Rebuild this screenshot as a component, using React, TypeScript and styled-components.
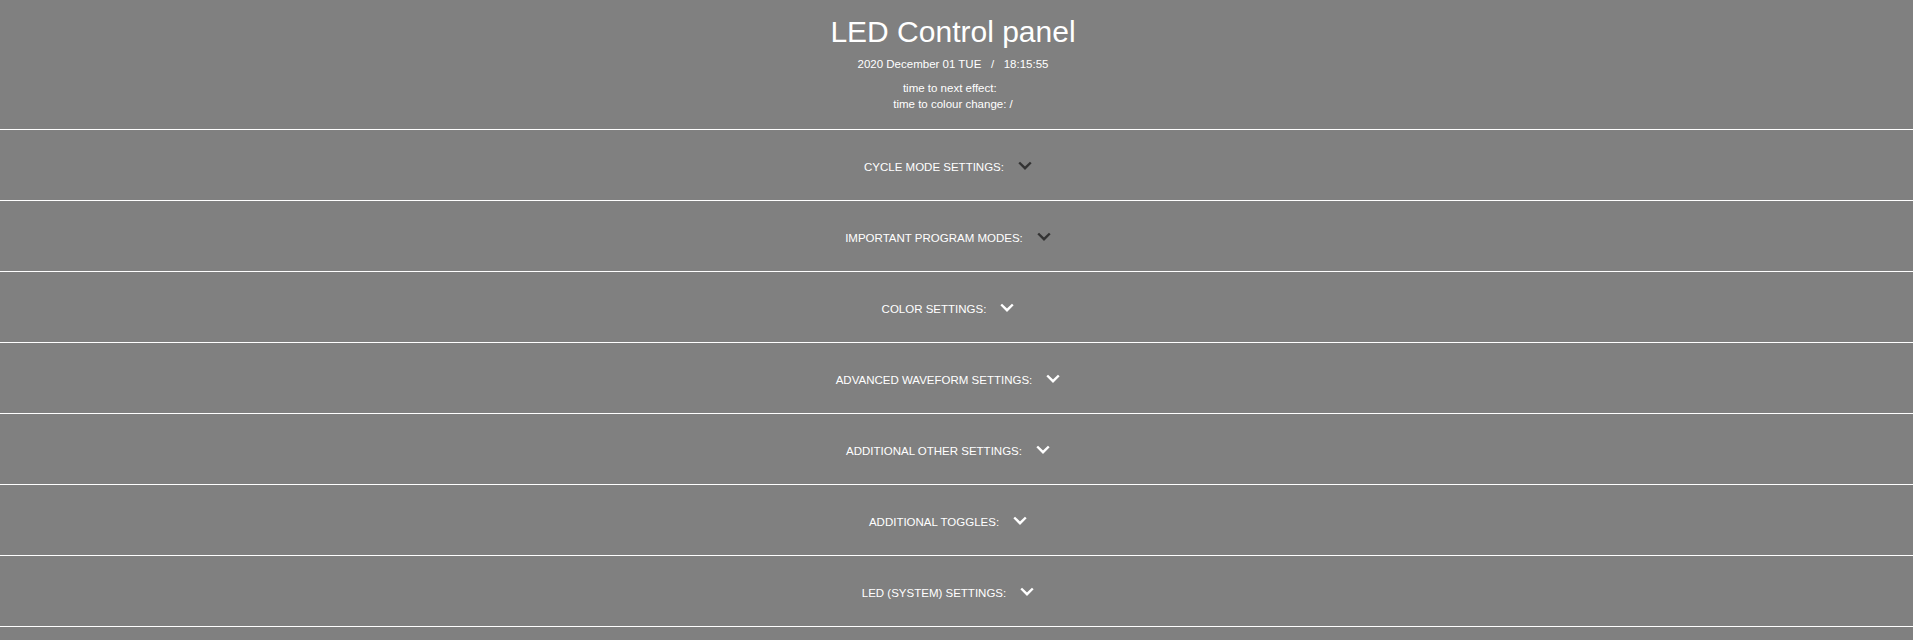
import React from "react";
import styled, { createGlobalStyle } from "styled-components";

const GlobalStyle = createGlobalStyle`
  html, body {
    margin: 0;
    padding: 0;
    background: #808080;
  }
  body {
    font-family: "Liberation Sans", Arial, sans-serif;
    color: #ffffff;
  }
`;

const Page = styled.div`
  min-height: 640px;
  background: #808080;
`;

const Header = styled.header`
  height: 129px;
  box-sizing: border-box;
  padding: 15px 7px 0 0;
  display: flex;
  flex-direction: column;
  align-items: center;
`;

const Title = styled.h1`
  margin: 0;
  font-size: 30px;
  font-weight: 400;
  line-height: 34px;
`;

const DateLine = styled.div`
  margin-top: 9px;
  font-size: 11.5px;
  line-height: 13px;
  white-space: pre;
`;

const Timers = styled.div`
  margin-top: 10px;
  font-size: 11.5px;
  line-height: 15.5px;
  text-align: center;
`;

const TimerLine = styled.div`
  white-space: pre;
`;

const Sections = styled.div`
  display: flex;
  flex-direction: column;
  border-bottom: 1px solid #ffffff;
`;

const Row = styled.div`
  height: 71px;
  box-sizing: border-box;
  padding-top: 4px;
  border-top: 1px solid #ffffff;
  display: flex;
  align-items: center;
  justify-content: center;
  font-size: 11.5px;
  text-transform: uppercase;
  cursor: pointer;
`;

const Label = styled.span`
  line-height: 14px;
`;

const Chevron = styled.svg<{ $dark?: boolean }>`
  width: 14px;
  height: 9px;
  margin: 0 17px 3px 14px;
  stroke: ${(p) => (p.$dark ? "#333333" : "#ffffff")};
  fill: none;
  stroke-width: 2.4;
`;

const sections: { label: string; dark?: boolean }[] = [
  { label: "CYCLE MODE SETTINGS:", dark: true },
  { label: "IMPORTANT PROGRAM MODES:", dark: true },
  { label: "COLOR SETTINGS:" },
  { label: "ADVANCED WAVEFORM SETTINGS:" },
  { label: "ADDITIONAL OTHER SETTINGS:" },
  { label: "ADDITIONAL TOGGLES:" },
  { label: "LED (SYSTEM) SETTINGS:" },
];

export default function App() {
  return (
    <Page>
      <GlobalStyle />
      <Header>
        <Title>LED Control panel</Title>
        <DateLine>{"2020 December 01 TUE   /   18:15:55"}</DateLine>
        <Timers>
          <TimerLine>{"time to next effect:  "}</TimerLine>
          <TimerLine>{"time to colour change: /"}</TimerLine>
        </Timers>
      </Header>
      <Sections>
        {sections.map((s) => (
          <Row key={s.label}>
            <Label>{s.label}</Label>
            <Chevron $dark={s.dark} viewBox="0 0 14 9">
              <polyline points="1.2,1.5 7,7.2 12.8,1.5" />
            </Chevron>
          </Row>
        ))}
      </Sections>
    </Page>
  );
}
